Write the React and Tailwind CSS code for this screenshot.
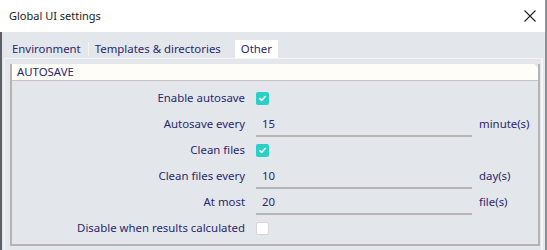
const TEXT = 'text-[#2b2671]';

function Check({ on }) {
  if (!on) {
    return <span className="block h-[13px] w-[13px] rounded-[2px] border border-[#d6d6d6] bg-white" />;
  }
  return (
    <span className="flex h-[13px] w-[13px] items-center justify-center rounded-[2px] bg-[#2ccfc6]">
      <svg width="9" height="9" viewBox="0 0 9 9" fill="none">
        <path d="M1.8 4.6 L3.7 6.4 L7.2 2.6" stroke="white" strokeWidth="1.5" strokeLinecap="round" strokeLinejoin="round" />
      </svg>
    </span>
  );
}

function Row({ label, children, unit }) {
  return (
    <div className="flex h-[26px] items-center">
      <div className={`w-[233px] shrink-0 text-right ${TEXT}`}>{label}</div>
      <div className="ml-[11px] flex h-full items-center">{children}</div>
      {unit && <div className={`ml-[7px] ${TEXT}`}>{unit}</div>}
    </div>
  );
}

function Field({ value }) {
  return (
    <div className={`flex h-full w-[216px] items-center border-b-2 border-[#b5b5b5] pl-[6px] pt-[2px] ${TEXT}`}>
      {value}
    </div>
  );
}

export default function App() {
  return (
    <div
      className="flex h-[250px] w-[547px] flex-col overflow-hidden bg-white text-[11.4px]"
      style={{ fontFamily: '"Noto Sans", sans-serif' }}
    >
      <div className="flex h-[32px] shrink-0 items-center justify-between border-r-2 border-[#8c8f94] pl-[9px] pr-[8px] text-[11px] text-[#1b1b1b]">
        <span>Global UI settings</span>
        <svg width="12" height="12" viewBox="0 0 12 12" className="mr-[1px]">
          <path d="M0.5 0.5 L11.5 11.5 M11.5 0.5 L0.5 11.5" stroke="#222" strokeWidth="1.1" />
        </svg>
      </div>
      <div className="flex flex-1 flex-col border-l-2 border-r-2 border-l-[#5b5f66] border-r-[#8c8f94] bg-[#e3e6eb]">
        <div className={`mt-[8px] flex h-[18px] items-stretch ${TEXT}`}>
          <div className="flex items-center pl-[10px] pr-[7px]">Environment</div>
          <div className="my-[2px] w-px bg-[#f3f4f6]" />
          <div className="flex items-center pl-[6px]">Templates &amp; directories</div>
          <div className="ml-[14px] flex items-center bg-white px-[6px]">Other</div>
        </div>
        <div className="ml-[2px] mr-[2px] flex flex-1 flex-col border-l border-r-2 border-t border-[#f4f5f7] pl-[5px] pr-[1px] pt-[5px]">
          <div className="mb-[4px] flex flex-1 flex-col border-b-2 border-l-2 border-r-2 border-[#b4b4b4]">
            <div
              className={`flex h-[17px] items-center border-b border-[#c4c4c4] bg-[#fffdf8] pl-[5px] ${TEXT}`}
              style={{ clipPath: 'polygon(0 0, calc(100% - 4px) 0, 100% 4px, 100% 100%, 0 100%)' }}
            >
              AUTOSAVE
            </div>
            <div className="flex flex-col pt-[4px]">
              <Row label="Enable autosave"><Check on /></Row>
              <Row label="Autosave every" unit="minute(s)"><Field value="15" /></Row>
              <Row label="Clean files"><Check on /></Row>
              <Row label="Clean files every" unit="day(s)"><Field value="10" /></Row>
              <Row label="At most" unit="file(s)"><Field value="20" /></Row>
              <Row label="Disable when results calculated"><Check /></Row>
            </div>
          </div>
        </div>
      </div>
    </div>
  );
}
